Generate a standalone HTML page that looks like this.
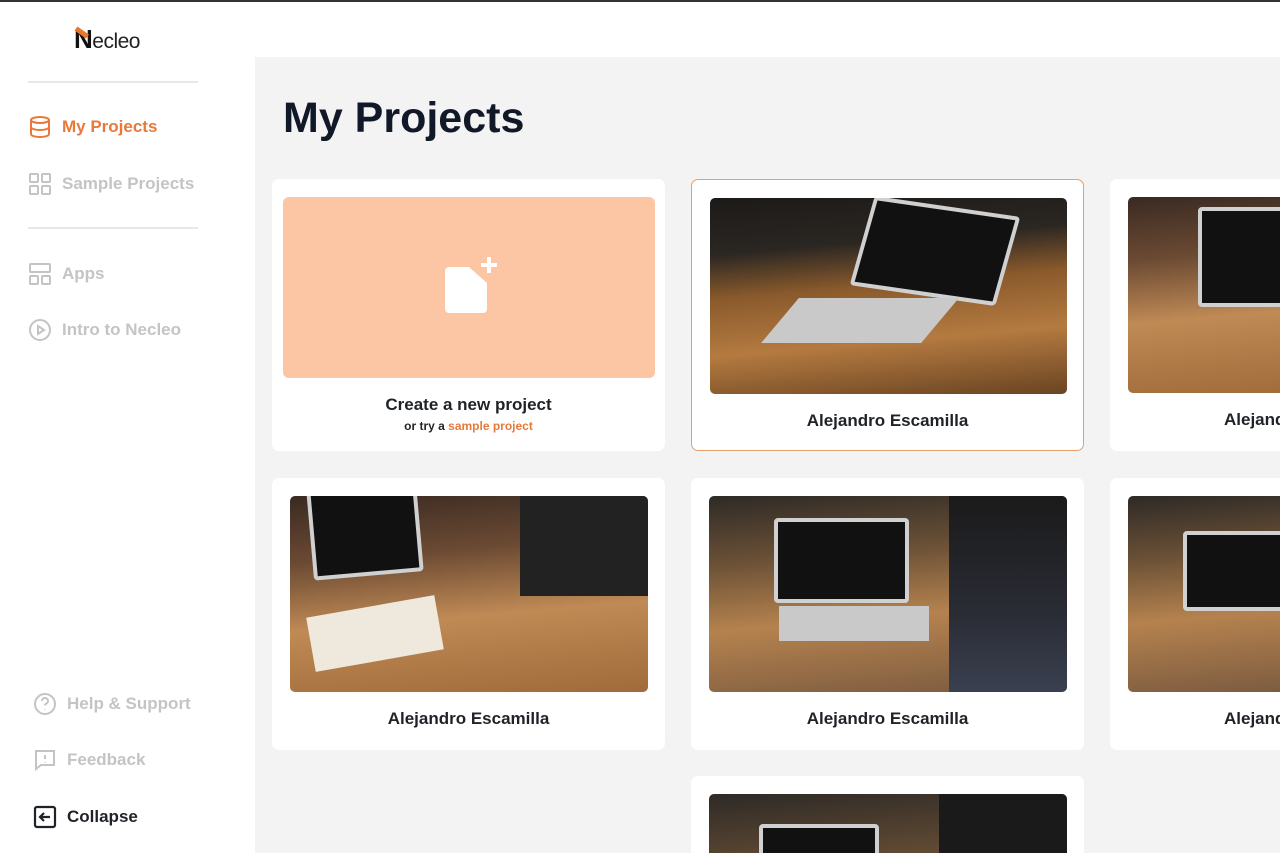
<!DOCTYPE html>
<html style="overflow:hidden;height:853px"><head><meta charset="utf-8"><style>
*{box-sizing:border-box;margin:0;padding:0}
body{width:1280px;height:853px;overflow:hidden;background:#fff;font-family:"Liberation Sans",sans-serif;position:relative}
.topbar{position:absolute;left:0;top:0;width:1280px;height:2px;background:#333}
.main{position:absolute;left:255px;top:57px;width:1025px;height:796px;background:#f3f3f3}
.logo{position:absolute;left:74px;top:24px;font-size:21px;color:#222;letter-spacing:-0.5px}
.logo b{font-size:26px;color:#111;font-weight:700;position:relative}
.logo b:after{content:"";position:absolute;left:2px;top:2px;width:14px;height:5px;background:#e8762d;transform:rotate(35deg);transform-origin:left}
.hr{position:absolute;left:28px;width:170px;height:2px;background:#e5e9ec}
.nav{position:absolute;left:28px;display:flex;align-items:center;font-size:17px;font-weight:700;color:#c4c4c4;white-space:nowrap}
.nav svg{margin-right:10px}
h1{position:absolute;left:283px;top:94px;font-size:43px;color:#111827;font-weight:700}
.card{position:absolute;background:#fff;border-radius:7px;width:393px;height:272px;overflow:hidden}
.card .img{position:absolute;left:18px;top:18px;width:357px;height:196px;border-radius:5px;overflow:hidden}
.card .t{position:absolute;left:0;right:0;top:231px;text-align:center;font-weight:700;font-size:17px;color:#1f2328;white-space:nowrap}
.p1{background:linear-gradient(175deg,#1c1a18 0%,#2a2622 25%,#8a5a2c 45%,#b47a40 70%,#6a4422 100%)}
.p2{background:linear-gradient(175deg,#3a2a22 0%,#6b4a33 30%,#c08a55 60%,#a06a3a 100%)}
.p3{background:linear-gradient(175deg,#2e2a26 0%,#6a5036 30%,#b5824e 60%,#7a5a40 100%)}
.lap{position:absolute;background:#111;border:4px solid #d0d0d0;border-radius:4px}
.base{position:absolute;background:#c9c9c9}
</style></head><body>
<div class="topbar"></div>
<div class="main"></div>
<div class="logo"><b>N</b>ecleo</div>
<div class="hr" style="top:81px"></div>
<div class="hr" style="top:227px"></div>
<div class="nav" style="top:115px;color:#e8793a">
<svg width="24" height="24" viewBox="0 0 24 24" fill="none" stroke="#e8793a" stroke-width="2"><ellipse cx="12" cy="5" rx="9" ry="3"/><path d="M3 5v14c0 1.7 4 3 9 3s9-1.3 9-3V5M3 12c0 1.7 4 3 9 3s9-1.3 9-3"/></svg>My Projects</div>
<div class="nav" style="top:172px">
<svg width="24" height="24" viewBox="0 0 24 24" fill="none" stroke="#c4c4c4" stroke-width="2"><rect x="2" y="2" width="8" height="8" rx="1"/><rect x="14" y="2" width="8" height="8" rx="1"/><rect x="2" y="14" width="8" height="8" rx="1"/><rect x="14" y="14" width="8" height="8" rx="1"/></svg>Sample Projects</div>
<div class="nav" style="top:262px">
<svg width="24" height="24" viewBox="0 0 24 24" fill="none" stroke="#c4c4c4" stroke-width="2"><rect x="2" y="2" width="20" height="8" rx="1"/><rect x="2" y="14" width="8" height="8" rx="1"/><rect x="14" y="14" width="8" height="8" rx="1"/></svg>Apps</div>
<div class="nav" style="top:318px">
<svg width="24" height="24" viewBox="0 0 24 24" fill="none" stroke="#c4c4c4" stroke-width="2"><circle cx="12" cy="12" r="10"/><path d="M10 8l6 4-6 4z"/></svg>Intro to Necleo</div>
<div class="nav" style="top:692px;left:33px">
<svg width="24" height="24" viewBox="0 0 24 24" fill="none" stroke="#c4c4c4" stroke-width="2"><circle cx="12" cy="12" r="10"/><path d="M9 9a3 3 0 1 1 4 2.8c-.7.3-1 .9-1 1.7M12 17v.5"/></svg>Help &amp; Support</div>
<div class="nav" style="top:748px;left:33px">
<svg width="24" height="24" viewBox="0 0 24 24" fill="none" stroke="#c4c4c4" stroke-width="2"><path d="M3 3h18v14H8l-5 4z"/><path d="M12 7v4M12 14v.5"/></svg>Feedback</div>
<div class="nav" style="top:805px;left:33px;color:#1f2328">
<svg width="24" height="24" viewBox="0 0 24 24" fill="none" stroke="#1f2328" stroke-width="2.2"><rect x="2" y="2" width="20" height="20" rx="2"/><path d="M17 12H7M11 8l-4 4 4 4"/></svg>Collapse</div>
<h1>My Projects</h1>

<div class="card" style="left:272px;top:179px">
<div style="position:absolute;left:11px;top:18px;width:372px;height:181px;background:#fcc6a4;border-radius:6px">
<svg style="position:absolute;left:158px;top:60px" width="60" height="60" viewBox="0 0 60 60"><path d="M4 14a4 4 0 0 1 4-4h20l18 16v26a4 4 0 0 1-4 4H8a4 4 0 0 1-4-4z" fill="#fff"/><path d="M48 0v16M40 8h16" stroke="#fff" stroke-width="4"/></svg></div>
<div style="position:absolute;top:216px;width:100%;text-align:center;font-weight:700;font-size:17px;color:#1f2328">Create a new project</div>
<div style="position:absolute;top:240px;width:100%;text-align:center;font-weight:700;font-size:12px;color:#1f2328">or try a <span style="color:#e8793a">sample project</span></div>
</div>

<div class="card" style="left:691px;top:179px;border:1px solid #e8a06a">
<div class="img p1" style="left:18px;top:18px"><div class="lap" style="left:150px;top:8px;width:150px;height:90px;transform:skewX(-8deg) rotate(8deg)"></div><div class="base" style="left:70px;top:100px;width:160px;height:45px;transform:skewX(-40deg)"></div></div>
<div class="t" style="top:231px">Alejandro Escamilla</div></div>

<div class="card" style="left:1110px;top:179px;width:170px;border-radius:7px 0 0 7px">
<div class="img p2" style="width:200px"><div class="lap" style="left:70px;top:10px;width:130px;height:100px"></div></div>
<div class="t" style="text-align:left;left:114px;top:231px">Alejandro Escamilla</div></div>

<div class="card" style="left:272px;top:478px">
<div class="img p2" style="width:358px"><div class="lap" style="left:20px;top:-10px;width:110px;height:90px;transform:rotate(-5deg)"></div><div style="position:absolute;left:20px;top:110px;width:130px;height:55px;background:#eee9dc;transform:rotate(-10deg)"></div><div style="position:absolute;left:230px;top:0;width:130px;height:100px;background:#222"></div></div>
<div class="t">Alejandro Escamilla</div></div>

<div class="card" style="left:691px;top:478px">
<div class="img p3" style="width:358px"><div class="lap" style="left:65px;top:22px;width:135px;height:85px"></div><div class="base" style="left:70px;top:110px;width:150px;height:35px"></div><div style="position:absolute;left:240px;top:0;width:118px;height:196px;background:linear-gradient(#1a1a1a,#2a2c35 60%,#3a4050)"></div></div>
<div class="t">Alejandro Escamilla</div></div>

<div class="card" style="left:1110px;top:478px;width:170px;border-radius:7px 0 0 7px">
<div class="img p3" style="width:200px"><div class="lap" style="left:55px;top:35px;width:110px;height:80px"></div></div>
<div class="t" style="text-align:left;left:114px">Alejandro Escamilla</div></div>

<div class="card" style="left:691px;top:776px;height:77px;border-radius:7px 7px 0 0">
<div class="img" style="width:358px;height:59px;border-radius:5px 5px 0 0;background:linear-gradient(175deg,#2e2a26,#6a5036)"><div class="lap" style="left:50px;top:30px;width:120px;height:40px"></div><div style="position:absolute;left:230px;top:0;width:128px;height:59px;background:#1a1a1a"></div></div></div>
</body></html>
